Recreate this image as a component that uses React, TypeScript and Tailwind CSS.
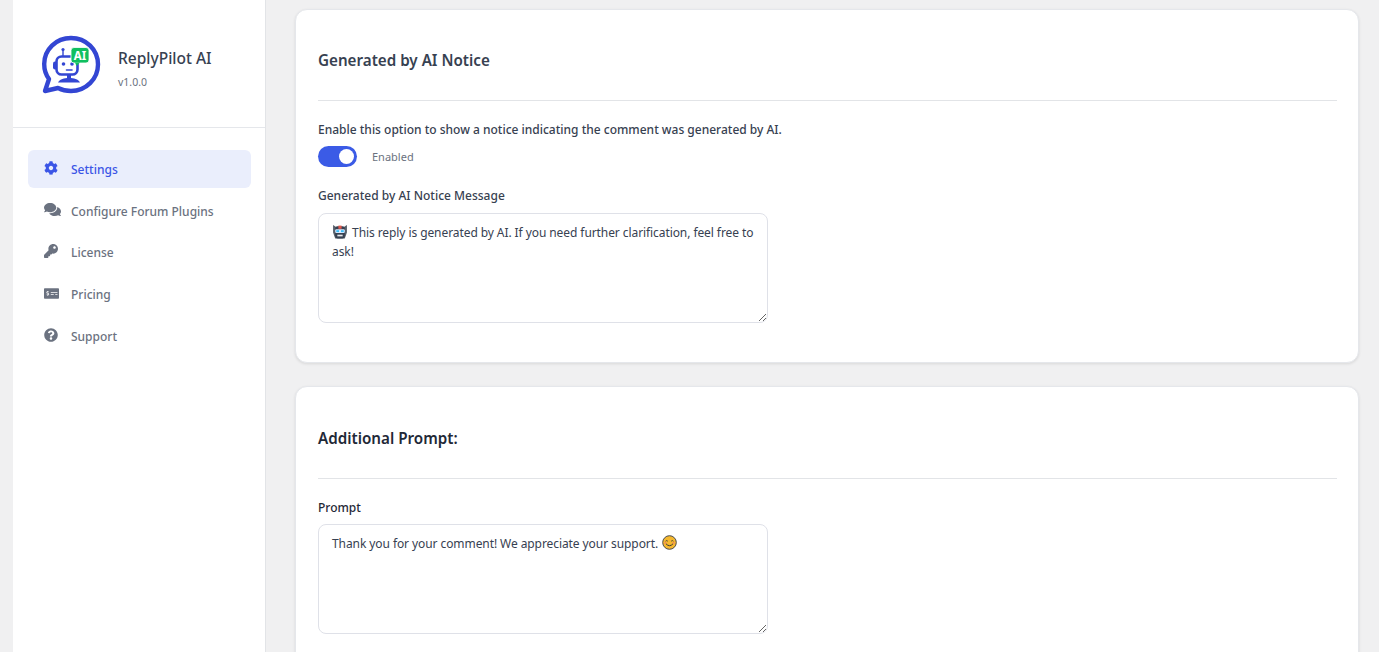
import React from "react";
import { FaCog, FaComments, FaKey, FaMoneyCheckAlt, FaQuestionCircle } from "react-icons/fa";

const font = { fontFamily: '"Noto Sans", sans-serif' };

function Logo() {
  return (
    <svg width="60" height="60" viewBox="0 0 60 60" className="shrink-0">
      <path d="M30 3 C15 3 3.2 14.5 3.2 29 C3.2 35 5 40 8 44 L4 56 L17 53 C21 55 25 56 30 56 C45 56 57 44 57 29.5 C57 14.5 45 3 30 3 Z" fill="none" stroke="#3346d3" strokeWidth="4.4" strokeLinejoin="round" />
      <circle cx="22" cy="14.5" r="1.6" fill="#3346d3" />
      <path d="M22 15v7" stroke="#3346d3" strokeWidth="1.4" />
      <rect x="12" y="26.5" width="4" height="8" rx="2" fill="#3346d3" />
      <rect x="15.5" y="21.5" width="21" height="18" rx="5" fill="none" stroke="#3346d3" strokeWidth="2.6" />
      <circle cx="22.5" cy="29" r="1.8" fill="#3346d3" />
      <circle cx="31" cy="29" r="1.8" fill="#3346d3" />
      <path d="M25.5 35h5.5" stroke="#3346d3" strokeWidth="1.6" strokeLinecap="round" />
      <path d="M26 40h4v3h-4z" fill="#3346d3" />
      <path d="M17 47.5 C19 44 23 43 28 43 C33 43 37 44 39 47.5 Z" fill="#3346d3" />
      <rect x="30" y="12.5" width="18" height="15.5" rx="3" fill="#0fbf5f" stroke="#fff" strokeWidth="0.8" />
      <path d="M34 27.5h5l-3.5 3.5z" fill="#0fbf5f" />
      <text x="39" y="24.6" textAnchor="middle" fontSize="11.5" fontWeight="700" fill="#fff" fontFamily='"Noto Sans", sans-serif'>AI</text>
    </svg>
  );
}

function RobotEmoji() {
  return (
    <svg width="16" height="16" viewBox="0 0 15 15" className="inline-block align-[-3px] mr-[1px]">
      <path d="M1 1l2.5 1.5h8L14 1v7l-2 5.5H3L1 8z" fill="#57606b" />
      <rect x="3" y="2" width="9" height="11.5" rx="2.5" fill="#374151" />
      <rect x="6" y="1.5" width="3" height="3" fill="#e2574c" />
      <rect x="3" y="5" width="9" height="3.5" rx="1" fill="#dbeafe" />
      <rect x="4" y="5.8" width="2.6" height="1.8" fill="#38bdf8" />
      <rect x="8.4" y="5.8" width="2.6" height="1.8" fill="#38bdf8" />
      <rect x="5" y="10" width="5" height="1.6" fill="#e5e7eb" />
    </svg>
  );
}

function SmileEmoji() {
  return (
    <svg width="15" height="15" viewBox="0 0 15 15" className="inline-block align-[-2px] ml-[1px]">
      <circle cx="7.5" cy="7.5" r="6.8" fill="#f5b82e" stroke="#4b4b4b" strokeWidth="1" />
      <path d="M3.6 6.2q1.1-1.3 2.2 0M9.2 6.2q1.1-1.3 2.2 0" stroke="#3b3b3b" strokeWidth="0.9" fill="none" />
      <path d="M4 8.8q3.5 3.8 7 0" stroke="#3b3b3b" strokeWidth="1" fill="none" />
      <circle cx="3.4" cy="8" r="1" fill="#f08a5d" />
      <circle cx="11.6" cy="8" r="1" fill="#f08a5d" />
    </svg>
  );
}

const nav = [
  { label: "Settings", Icon: FaCog, active: true, size: 14 },
  { label: "Configure Forum Plugins", Icon: FaComments, active: false, size: 17 },
  { label: "License", Icon: FaKey, active: false, size: 14 },
  { label: "Pricing", Icon: FaMoneyCheckAlt, active: false, size: 15 },
  { label: "Support", Icon: FaQuestionCircle, active: false, size: 14 },
];

function Card({ title, titleClass, headerClass, children, className }: { title: string; titleClass: string; headerClass: string; children: React.ReactNode; className: string }) {
  return (
    <section className={`bg-white rounded-xl border border-[#e5e7eb] shadow-[0_1px_3px_rgba(0,0,0,0.1)] pl-[22px] pr-[21px] ${className}`}>
      <div className={`flex items-center border-b border-[#e2e4e7] ${headerClass}`}>
        <h2 className={`text-[15.2px] font-semibold ${titleClass}`}>{title}</h2>
      </div>
      {children}
    </section>
  );
}

function TextBox({ children }: { children: React.ReactNode }) {
  return (
    <div className="w-[450px] h-[110px] rounded-lg border border-[#dfe1e8] bg-white pl-[13px] pr-[10px] py-[9px] text-[12px] leading-[19px] tracking-[-0.08px] text-[#374151] resize overflow-auto">
      {children}
    </div>
  );
}

export default function App() {
  return (
    <div style={font} className="flex h-screen overflow-hidden bg-[#f0f0f1] pl-[13px]">
      <aside className="w-[253px] shrink-0 bg-white border-r border-[#e2e4e7]">
        <div className="h-[128px] border-b border-[#e5e7eb] flex items-center gap-[17px] pl-[28px] pt-[3px]">
          <Logo />
          <div className="pt-[5px]">
            <div className="text-[15.5px] leading-[22px] font-medium text-[#374151]">ReplyPilot AI</div>
            <div className="text-[10.5px] leading-[14px] mt-[6px] text-[#6b7280]">v1.0.0</div>
          </div>
        </div>
        <nav className="flex flex-col gap-[4px] pt-[22px] pl-[15px] pr-[14px]">
          {nav.map(({ label, Icon, active, size }) => (
            <div
              key={label}
              className={`h-[37.75px] flex items-center rounded-md pl-[16px] pt-[2px] text-[12px] font-medium ${active ? "bg-[#eaeefc] text-[#3b55e6]" : "text-[#6b7280]"}`}
            >
              <span className="w-[27px] shrink-0 flex items-center -mt-[4px]">
                <Icon size={size} />
              </span>
              <span>{label}</span>
            </div>
          ))}
        </nav>
      </aside>
      <main className="flex-1 min-w-0 pt-[9px] pl-[29px] pr-[20px] flex flex-col gap-[23px]">
        <Card title="Generated by AI Notice" titleClass="text-[#374151]" headerClass="h-[91px] pt-[10px]" className="h-[354px] shrink-0">
          <p className="mt-[20px] text-[12px] leading-[17px] font-medium text-[#374151]">
            Enable this option to show a notice indicating the comment was generated by AI.
          </p>
          <div className="mt-[8px] flex items-center gap-[15px]">
            <span className="w-[39px] h-[21px] rounded-full bg-[#3b5be6] flex items-center justify-end pr-[3px]">
              <span className="w-[15px] h-[15px] rounded-full bg-white" />
            </span>
            <span className="text-[11px] text-[#6b7280] pt-[2px]">Enabled</span>
          </div>
          <p className="mt-[20px] mb-[9px] text-[12px] leading-[17px] font-medium text-[#374151]">Generated by AI Notice Message</p>
          <TextBox>
            <RobotEmoji /> This reply is generated by AI. If you need further clarification, feel free to ask!
          </TextBox>
        </Card>
        <Card title="Additional Prompt:" titleClass="text-[#1f2937]" headerClass="h-[92px] pt-[12px]" className="h-[400px] shrink-0">
          <p className="mt-[20px] mb-[8px] text-[12px] leading-[17px] font-medium text-[#1f2937]">Prompt</p>
          <TextBox>
            Thank you for your comment! We appreciate your support. <SmileEmoji />
          </TextBox>
        </Card>
      </main>
    </div>
  );
}
